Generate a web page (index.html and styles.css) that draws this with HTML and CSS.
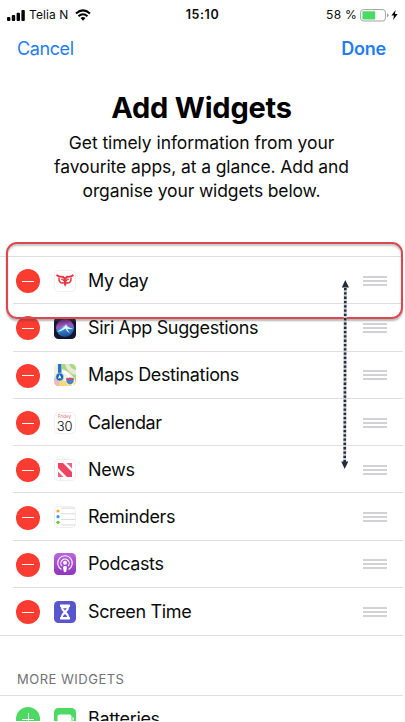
FILE: index.html
```
<!DOCTYPE html>
<html lang="en">
<head>
<meta charset="utf-8">
<title>Add Widgets</title>
<link rel="stylesheet" href="styles.css">
</head>
<body>
<div class="screen">
  <header class="status">
    <div class="carrier">
      <svg width="18" height="11" viewBox="0 0 18 11"><rect x="0" y="7" width="3.4" height="4" rx="1"/><rect x="4.8" y="5" width="3.4" height="6" rx="1"/><rect x="9.6" y="2.7" width="3.4" height="8.3" rx="1"/><rect x="14.4" y="0" width="3.4" height="11" rx="1"/></svg>
      <span class="carrier-name">Telia N</span>
      <svg width="16" height="12" viewBox="0 0 16 12"><g fill="none" stroke="#000" stroke-width="2.1"><path d="M1 4.5Q8-1.8 15 4.5"/><path d="M3.5 7.3Q8 3.2 12.5 7.3"/></g><path d="M5.5 9.1Q8 7 10.5 9.1L8 11.7Z"/></svg>
    </div>
    <div class="time">15:10</div>
    <div class="power">
      <span class="percent">58 %</span>
      <svg width="29" height="13" viewBox="0 0 29 13"><rect x=".6" y=".6" width="24.8" height="11.4" rx="2.8" fill="#fff" stroke="#a2a2a2"/><rect x="2.4" y="2.2" width="12.8" height="8.2" rx="1" fill="#4cd964"/><path d="M27 4.2q1.6.5 1.6 2.1T27 8.400Z" fill="#a2a2a2"/></svg>
      <svg width="7" height="10" viewBox="0 0 7 10"><path d="M4.600 0L.4 5.500H3.100L2 10 6.700 4.100H3.900Z"/></svg>
    </div>
  </header>
  <nav class="nav"><span class="cancel">Cancel</span><span class="done">Done</span></nav>
  <section class="intro">
    <h1>Add Widgets</h1>
    <p><span class="l1">Get timely information from your</span><br><span class="l2">favourite apps, at a glance. Add and</span><br><span class="l3">organise your widgets below.</span></p>
  </section>
  <main class="list">
    <div class="row">
      <i class="toggle"></i>
      <svg class="icon" viewBox="0 0 22 22"><rect x=".5" y=".5" width="21" height="21" rx="4" fill="#fff" stroke="#f1f1f1"/><g fill="none" stroke="#e4343d"><path d="M2.500 5Q5 7.100 9 6.800L11 8.800 13 6.800Q17 7.100 19.500 5" stroke-width="1.900"/><path d="M5 7.500C4.500 12 7 13.800 9.800 12.500M17 7.500C17.500 12 15 13.800 12.200 12.500" stroke-width="1.500"/><path d="M7 9.500Q9 8 9.500 11M15 9.500Q13 8 12.500 11" stroke-width="1.200"/></g><path d="M9.800 10L11 8.500l1.300 1.500.3 4L11 17 10 14Z" fill="#e4343d"/></svg>
      <span class="name">My day</span><i class="grip"></i>
    </div>
    <div class="row">
      <i class="toggle"></i>
      <svg class="icon" viewBox="0 0 22 22"><defs><linearGradient id="siri" x1=".2" y1="0" x2=".4" y2="1"><stop offset="0" stop-color="#3a2560"/><stop offset=".4" stop-color="#b04cbd"/><stop offset=".6" stop-color="#3a83d0"/><stop offset="1" stop-color="#1c4d94"/></linearGradient></defs><rect width="22" height="22" rx="4.500" fill="#15162d"/><circle cx="11" cy="11" r="9" fill="url(#siri)"/><path d="M2.500 15C6 13 8 9 12 7Q13 10 19.500 12Q14 13 12 11Q8 15 2.500 15Z" fill="#43cfe5" opacity=".75"/><path d="M3.500 14.500Q9 12 12.500 7.500Q12.500 10.500 19 11.500Q15 12.500 13 11.500L16 16.500Q12 14 11.500 11.500Q8 14 3.500 14.500Z" fill="#fff" opacity=".85"/></svg>
      <span class="name">Siri App Suggestions</span><i class="grip"></i>
    </div>
    <div class="row">
      <i class="toggle"></i>
      <svg class="icon" viewBox="0 0 22 22"><defs><clipPath id="mapclip"><rect width="22" height="22" rx="4.500"/></clipPath></defs><g clip-path="url(#mapclip)"><rect width="22" height="22" fill="#f1eee4"/><path d="M8 0H22V22C22 14 17 8 8 5Z" fill="#a5d982"/><path d="M11 0Q13 9 22 11V6Q17 5 15 0Z" fill="#ece7d8"/><path d="M0 15L22 19V22H0Z" fill="#f7d97c"/><path d="M0 14H5V22H0Z" fill="#efb9c4"/><path d="M8 7Q16 9 19 22" fill="none" stroke="#fff" stroke-width="2"/><path d="M5.700 0V12" stroke="#2975bb" stroke-width="3.500"/><circle cx="5.700" cy="13" r="4" fill="#1968b4" stroke="#d9e9f6" stroke-width=".6"/><path d="M5.700 10.500L7.500 14.800 5.700 14 3.900 14.800Z" fill="#fff"/><path d="M12 14Q16 12.500 20 14V18Q18 21 16 21T12 18Z" fill="#4f82bd" stroke="#fff" stroke-width=".7"/><path d="M12.200 14.500Q16 13 19.800 14.500V16H12.200Z" fill="#ca5068"/></g></svg>
      <span class="name">Maps Destinations</span><i class="grip"></i>
    </div>
    <div class="row">
      <i class="toggle"></i>
      <span class="icon calendar"><small>Friday</small><b>30</b></span>
      <span class="name">Calendar</span><i class="grip"></i>
    </div>
    <div class="row">
      <i class="toggle"></i>
      <svg class="icon" viewBox="0 0 22 22"><rect x=".5" y=".5" width="21" height="21" rx="4" fill="#fff" stroke="#eee"/><path d="M4 4H9L18 13V18H13L4 9Z" fill="#ed4561"/><path d="M12.500 4H18V9.500ZM4 12.500L9.500 18H4Z" fill="#f06582"/></svg>
      <span class="name">News</span><i class="grip"></i>
    </div>
    <div class="row">
      <i class="toggle"></i>
      <svg class="icon" viewBox="0 0 22 22"><rect x=".5" y=".5" width="21" height="21" rx="4" fill="#fff" stroke="#eee"/><path d="M7 2.200H21M7 7.800H21M7 13.400H21M7 19H21" stroke="#d5d5d8" stroke-width=".9"/><circle cx="4" cy="5" r="1.600" fill="#eda728"/><circle cx="4" cy="10.700" r="1.600" fill="#3498f4"/><circle cx="4" cy="16.300" r="1.600" fill="#70bd3a"/></svg>
      <span class="name">Reminders</span><i class="grip"></i>
    </div>
    <div class="row">
      <i class="toggle"></i>
      <svg class="icon" viewBox="0 0 22 22"><defs><linearGradient id="pod" x2="0" y2="1"><stop stop-color="#bd64dc"/><stop offset="1" stop-color="#8d35bd"/></linearGradient></defs><rect width="22" height="22" rx="4.500" fill="url(#pod)"/><g fill="none" stroke="#fff" stroke-width="1.100"><path d="M7.500 16.400A7.300 7.300 0 1 1 14.500 16.400"/><path d="M8 13.200A4.200 4.200 0 1 1 14 13.200"/></g><circle cx="11" cy="9.800" r="2" fill="#fff"/><path d="M9 13.800Q11 12 13 13.800L12.300 18.500Q11 20 9.700 18.500Z" fill="#fff"/></svg>
      <span class="name">Podcasts</span><i class="grip"></i>
    </div>
    <div class="row">
      <i class="toggle"></i>
      <svg class="icon" viewBox="0 0 22 22"><rect width="22" height="22" rx="4.500" fill="#5955cf"/><path d="M6 3.500H16V6H15.200Q15.200 8.800 12.400 11 15.200 13.200 15.200 16H16V18.500H6V16H6.800Q6.800 13.200 9.600 11 6.800 8.800 6.800 6H6Z" fill="#fff"/><path d="M9 7.200H13L11 9.500ZM8.700 16Q9 14.400 11 13 13 14.400 13.300 16Z" fill="#5955cf"/></svg>
      <span class="name">Screen Time</span><i class="grip"></i>
    </div>
    <div class="highlight"></div>
    <svg class="arrow" width="10" height="190" viewBox="0 0 10 190"><path d="M5.300 8L4.700 184" stroke="#c8cbd0" stroke-width="3"/><path d="M5.300 8L4.700 184" stroke="#262c3c" stroke-width="2.600" stroke-dasharray="2.300 2"/><path d="M5.300 0L9 7.500H1.800ZM4.700 189L1.200 181.500H8.300Z" fill="#262c3c"/></svg>
  </main>
  <h2>MORE WIDGETS</h2>
  <section class="more">
    <div class="row">
      <i class="toggle add"></i>
      <svg class="icon" viewBox="0 0 22 22"><rect width="22" height="22" rx="4.500" fill="#4cd964"/><rect x="3.500" y="6.500" width="14" height="9" rx="2" fill="#fff"/><path d="M18.500 9Q20 9.500 20 11T18.500 13Z" fill="#fff"/></svg>
      <span class="name">Batteries</span>
    </div>
  </section>
</div>
</body>
</html>
```
FILE: styles.css
```
* { box-sizing: border-box; }
html, body { margin: 0; background: #fff; }
body { height: 722px; overflow: hidden; font-family: Inter, "Liberation Sans", sans-serif; color: #0b0b0b; }
.screen { width: 403px; height: 721px; overflow: hidden; }
svg { display: block; flex: none; }

.status { display: grid; grid-template-columns: 1fr auto 1fr; align-items: center; height: 28px; padding: 2px 5px 0 7px; font-size: 12px; line-height: 16px; }
.carrier, .power { display: flex; align-items: center; white-space: nowrap; }
.carrier-name { margin: 0 7px 0 4px; letter-spacing: .1px; }
.time { font-weight: 600; font-size: 12.5px; letter-spacing: .55px; }
.power { justify-content: flex-end; }
.percent { margin-right: 3px; letter-spacing: .25px; }
.power svg + svg { margin-left: 2px; }

.nav { display: flex; justify-content: space-between; height: 42px; padding: 0 17px; font-size: 18px; line-height: 42px; color: #1f7df2; }
.cancel { letter-spacing: -.4px; }
.done { font-weight: 600; letter-spacing: -.2px; }

.intro { height: 186px; padding-top: 20px; text-align: center; white-space: nowrap; }
h1 { margin: 0; font-size: 29px; line-height: 36px; font-weight: 700; letter-spacing: -.2px; color: #000; }
p { margin: 5px 0 0; font-size: 17.5px; line-height: 24px; }
.l1 { letter-spacing: -.07px; }
.l2 { letter-spacing: -.09px; }
.l3 { letter-spacing: -.13px; }

.list { position: relative; height: 380px; border-top: 1px solid #dedee2; border-bottom: 1px solid #dedee2; }
.row { position: relative; display: flex; align-items: center; height: 47.3px; padding: 0 16px; }
.list .row:not(:nth-child(8))::after { content: ""; position: absolute; left: 13px; right: 0; bottom: 0; height: 1px; background: #dedee2; }
.toggle { display: grid; place-items: center; flex: none; width: 24px; height: 24px; margin-top: 1px; border-radius: 50%; background: #fc3b31; }
.toggle::before { content: ""; grid-area: 1/1; width: 12px; height: 1px; background: #fff; }
.add { background: #4cd964; }
.add::after { content: ""; grid-area: 1/1; width: 1px; height: 12px; background: #fff; }
.icon { flex: none; width: 22px; height: 22px; margin: 0 12.5px 0 13.5px; }
.name { flex: 1; font-size: 18px; line-height: 24px; letter-spacing: -.36px; white-space: nowrap; }
.grip { width: 24px; height: 10px; border-top: 2px solid #d2d2d6; border-bottom: 2px solid #d2d2d6; background: linear-gradient(#d2d2d6, #d2d2d6) center / 100% 2px no-repeat; }

.calendar { display: flex; flex-direction: column; align-items: center; border: 1px solid #f0f0f0; border-radius: 4.5px; background: #fff; }
.calendar small { height: 6px; font-size: 4.5px; line-height: 7px; color: #ed6b70; }
.calendar b { font-size: 13px; line-height: 14px; font-weight: 300; letter-spacing: -.3px; }

.highlight { position: absolute; left: 6px; top: -15px; width: 397px; height: 77px; border: 2px solid #dc4850; border-radius: 11px; box-shadow: 0 2px 2px rgba(70,70,70,.4), inset 0 2px 2px rgba(70,70,70,.3); }
.arrow { position: absolute; left: 340px; top: 23px; }

h2 { height: 59px; margin: 0; padding: 34px 17px 0; font-size: 13px; line-height: 18px; font-weight: 400; letter-spacing: .5px; color: #717176; }
.more { border-top: 1px solid #dedee2; }
.more .row { height: 45.300px; }
```
